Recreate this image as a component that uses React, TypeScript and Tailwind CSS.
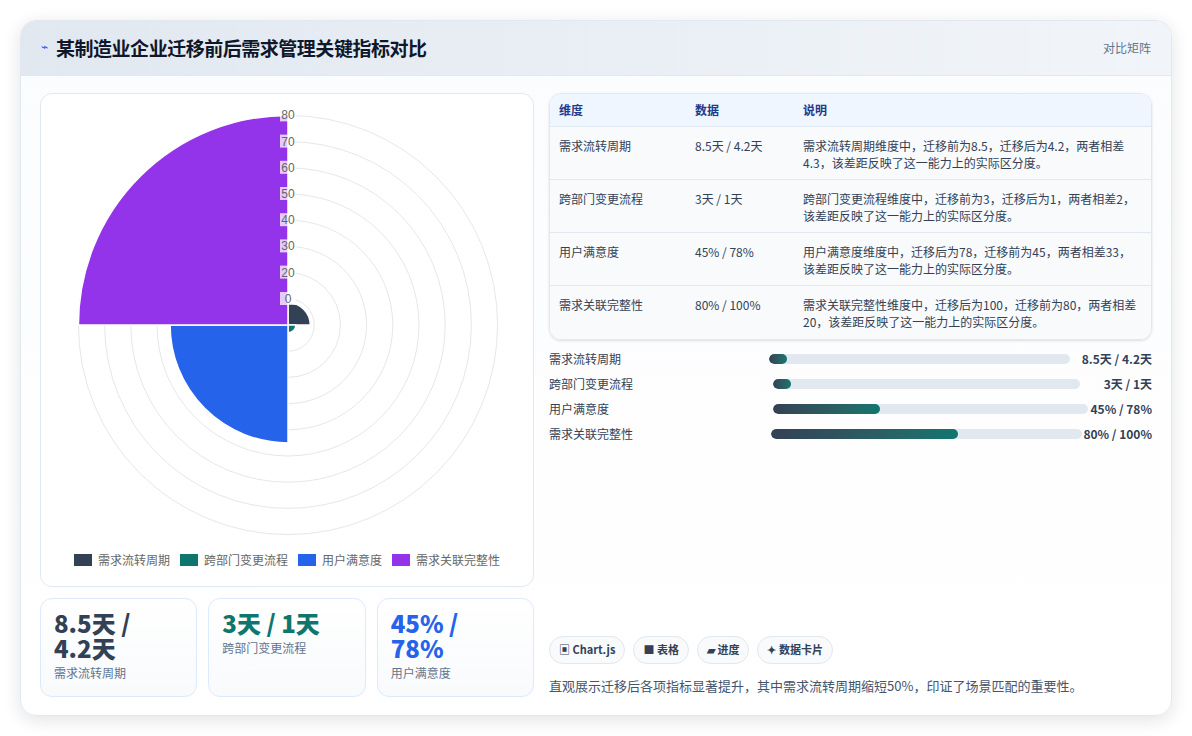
import React from "react";

const F = { fontFamily: '"Noto Sans CJK SC", "Noto Sans", sans-serif' };

function arc(cx: number, cy: number, r: number, a0: number, a1: number) {
  const p = (a: number) => [cx + r * Math.cos((a * Math.PI) / 180), cy + r * Math.sin((a * Math.PI) / 180)];
  const [x0, y0] = p(a0);
  const [x1, y1] = p(a1);
  return `M${cx},${cy} L${x0},${y0} A${r},${r} 0 0 1 ${x1},${y1} Z`;
}

function Polar() {
  const cx = 247, cy = 229, k = 2.62;
  const vals = [8.5, 3, 45, 80];
  const cols = ["#334155", "#0f766e", "#2563eb", "#9333ea"];
  return (
    <svg width="492" height="450" className="block">
      {[1, 2, 3, 4, 5, 6, 7, 8].map((i) => (
        <circle key={i} cx={cx} cy={cy} r={i * 10 * k} fill="none" stroke="#e5e7eb" strokeWidth="1" />
      ))}
      {vals.map((v, i) => (
        <path key={i} d={arc(cx, cy, v * k, -90 + i * 90, i * 90)} fill={cols[i]} stroke="#fff" strokeWidth="1.5" />
      ))}
      {[0, 20, 30, 40, 50, 60, 70, 80].map((t) => {
        const y = t === 0 ? cy - 26 : cy - t * k;
        return (
          <g key={t}>
            <rect x={cx - 8} y={y - 7} width="16" height="13" fill="#fff" opacity="0.75" />
            <text x={cx} y={y + 4} textAnchor="middle" fontSize="12" fill="#666" fontFamily="Liberation Sans, sans-serif">{t}</text>
          </g>
        );
      })}
    </svg>
  );
}

const rows = [
  ["需求流转周期", "8.5天 / 4.2天", "需求流转周期维度中，迁移前为8.5，迁移后为4.2，两者相差4.3，该差距反映了这一能力上的实际区分度。"],
  ["跨部门变更流程", "3天 / 1天", "跨部门变更流程维度中，迁移前为3，迁移后为1，两者相差2，该差距反映了这一能力上的实际区分度。"],
  ["用户满意度", "45% / 78%", "用户满意度维度中，迁移后为78，迁移前为45，两者相差33，该差距反映了这一能力上的实际区分度。"],
  ["需求关联完整性", "80% / 100%", "需求关联完整性维度中，迁移后为100，迁移前为80，两者相差20，该差距反映了这一能力上的实际区分度。"],
];

const bars = [
  { l: "需求流转周期", v: "8.5天 / 4.2天", p: 6, lw: 220, vw: 82 },
  { l: "跨部门变更流程", v: "3天 / 1天", p: 6, lw: 224, vw: 72 },
  { l: "用户满意度", v: "45% / 78%", p: 34, lw: 224, vw: 64 },
  { l: "需求关联完整性", v: "80% / 100%", p: 60, lw: 222, vw: 70 },
];

export default function App() {
  return (
    <div className="w-[1192px] h-[736px] bg-white p-5" style={F}>
      <div className="h-[696px] w-[1152px] rounded-2xl border border-slate-200 shadow-[0_4px_18px_rgba(15,23,42,0.12)] overflow-hidden bg-gradient-to-b from-[#fbfcfe] to-white flex flex-col">
        <div className="h-[55px] shrink-0 flex items-center justify-between px-5 bg-gradient-to-r from-[#e2e8f0] to-[#f1f5f9] border-b border-slate-200">
          <div className="flex items-center gap-2">
            <span className="text-blue-600 text-[12px] -mt-1">⌁</span>
            <span className="text-[19px] font-bold text-[#0f172a] tracking-tight">某制造业企业迁移前后需求管理关键指标对比</span>
          </div>
          <span className="text-[12px] text-slate-500">对比矩阵</span>
        </div>
        <div className="flex-1 flex gap-[15px] px-[19px] pt-[17px] pb-[18px]">
          <div className="w-[494px] flex flex-col gap-[11px]">
            <div className="h-[494px] rounded-xl border border-slate-200 bg-white flex flex-col items-center pt-[2px]">
              <Polar />
              <div className="flex items-center gap-[10px] text-[12px] text-[#666] mt-[5px]">
                {[["#334155", "需求流转周期"], ["#0f766e", "跨部门变更流程"], ["#2563eb", "用户满意度"], ["#9333ea", "需求关联完整性"]].map(([c, t]) => (
                  <div key={t} className="flex items-center gap-[6px]">
                    <span className="w-[18px] h-[12px] inline-block" style={{ background: c }} />
                    {t}
                  </div>
                ))}
              </div>
            </div>
            <div className="flex gap-[11px] h-[99px]">
              {[
                ["8.5天 / 4.2天", "需求流转周期", "text-[#334155]"],
                ["3天 / 1天", "跨部门变更流程", "text-[#0f766e]"],
                ["45% / 78%", "用户满意度", "text-[#2563eb]"],
              ].map(([v, l, c]) => (
                <div key={l} className="flex-1 rounded-xl border border-blue-100 bg-gradient-to-b from-white to-[#f8fafc] px-[13px] pt-[11px]">
                  <div className={`text-[24px] leading-[25px] font-extrabold ${c} w-[110px]`}>{v}</div>
                  <div className="text-[12px] text-slate-500 mt-[4px]">{l}</div>
                </div>
              ))}
            </div>
          </div>
          <div className="flex-1 flex flex-col">
            <div className="rounded-xl border border-slate-200 overflow-hidden shadow-sm">
              <div className="flex h-[33px] items-center bg-[#eff6ff] border-b border-slate-200 text-[12px] font-bold text-[#1e3a8a]">
                <div className="w-[145px] pl-[9px]">维度</div>
                <div className="w-[108px]">数据</div>
                <div className="flex-1">说明</div>
              </div>
              {rows.map((r, i) => (
                <div key={i} className={`flex h-[53px] pt-[10px] text-[12px] text-[#334155] bg-[#f8fafc] ${i < 3 ? "border-b border-slate-200" : ""}`}>
                  <div className="w-[145px] pl-[9px]">{r[0]}</div>
                  <div className="w-[108px]">{r[1]}</div>
                  <div className="flex-1 pr-[10px] leading-[17px]">{r[2]}</div>
                </div>
              ))}
            </div>
            <div className="flex flex-col gap-[9px] mt-[11px]">
              {bars.map((b) => (
                <div key={b.l} className="flex items-center h-[16px] text-[12px]">
                  <div className="text-[#334155]" style={{ width: b.lw }}>{b.l}</div>
                  <div className="flex-1 h-[10px] rounded-full bg-[#e2e8f0] overflow-hidden">
                    <div className="h-full rounded-full bg-gradient-to-r from-[#334155] to-[#0f766e]" style={{ width: b.p + "%", minWidth: 18 }} />
                  </div>
                  <div className="text-right font-bold text-[#334155]" style={{ width: b.vw }}>{b.v}</div>
                </div>
              ))}
            </div>
            <div className="flex-1" />
            <div className="flex gap-2 text-[11px] font-bold text-[#334155]">
              {["▣ Chart.js", "■ 表格", "▰ 进度", "✦ 数据卡片"].map((t) => (
                <span key={t} className="px-[9px] h-[28px] flex items-center rounded-full border border-slate-200 bg-[#f8fafc]">{t}</span>
              ))}
            </div>
            <div className="text-[13px] text-slate-600 mt-[12px] mb-[2px]">直观展示迁移后各项指标显著提升，其中需求流转周期缩短50%，印证了场景匹配的重要性。</div>
          </div>
        </div>
      </div>
    </div>
  );
}
